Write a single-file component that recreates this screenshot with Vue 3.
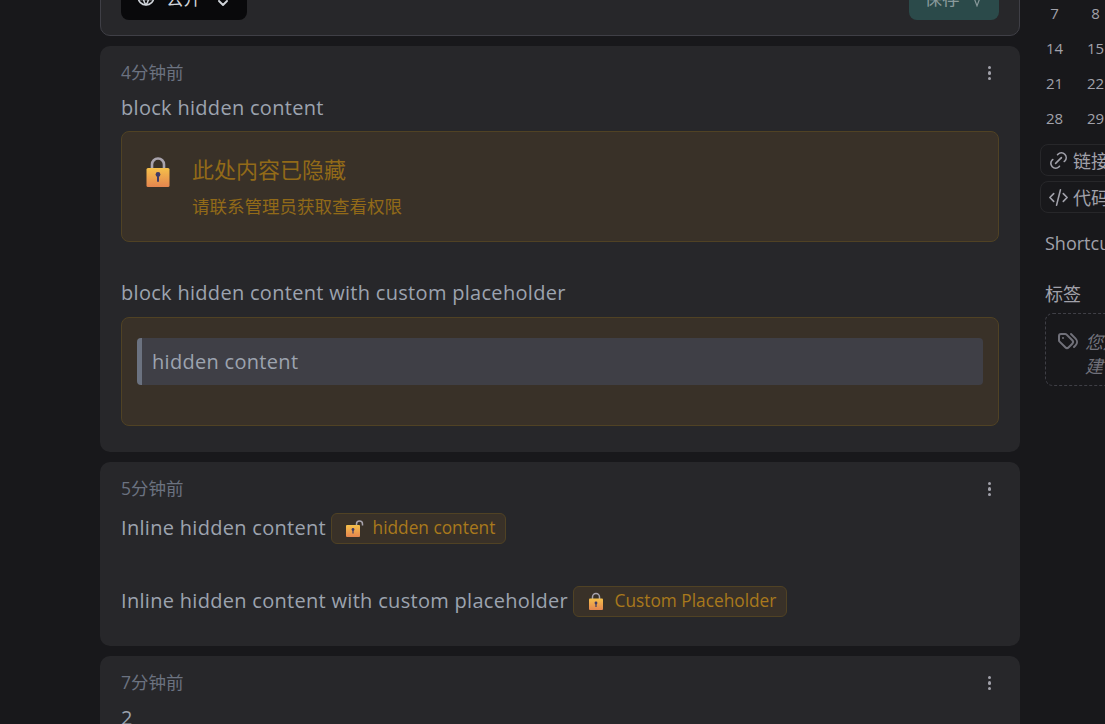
<script setup>
const days = [[7, 8], [14, 15], [21, 22], [28, 29]];
</script>

<template>
  <div class="page">
    <main class="main">
      <section class="editor">
        <div class="vis">
          <svg class="globe" width="20" height="20" viewBox="0 0 24 24" fill="none" stroke="currentColor" stroke-width="1.800" stroke-linecap="round"><circle cx="12" cy="12" r="9.500"/><path d="M3 9h18M3 15h18M11.500 3a17 17 0 0 0 0 18M12.500 3a17 17 0 0 1 0 18"/></svg>
          <span class="vis-label">公开</span>
          <svg class="chev" width="16" height="16" viewBox="0 0 24 24" fill="none" stroke="currentColor" stroke-width="2.800" stroke-linecap="round" stroke-linejoin="round"><path d="M6 9l6 6 6-6"/></svg>
        </div>
        <div class="save">
          <span>保存</span>
          <svg class="save-v" width="14" height="14" viewBox="0 0 24 24" fill="none" stroke="currentColor" stroke-width="2"><path d="M6 6l6 16 6-16"/></svg>
        </div>
      </section>

      <article class="card c1">
        <header class="meta"><span class="ago">4分钟前</span><span class="dots"><i></i><i></i><i></i></span></header>
        <p class="line">block hidden content</p>
        <div class="hidden-box">
          <svg class="lock" width="28" height="32" viewBox="0 0 28 32">
            <defs><linearGradient id="lg1" x1="0" y1="0" x2="0" y2="1"><stop offset="0" stop-color="#f5c04a"/><stop offset="1" stop-color="#e5854f"/></linearGradient></defs>
            <path d="M8 14V7.500a6 6 0 0 1 12 0V14" fill="none" stroke="#a8a3ad" stroke-width="2.600"/>
            <rect x="2.500" y="11" width="23" height="19" rx="1.500" fill="url(#lg1)"/>
            <circle cx="14" cy="17.500" r="2.400" fill="#3f3a66"/><rect x="13" y="17.500" width="2" height="7.500" rx="1" fill="#3f3a66"/>
          </svg>
          <div>
            <div class="hb-title">此处内容已隐藏</div>
            <div class="hb-sub">请联系管理员获取查看权限</div>
          </div>
        </div>
        <p class="line second">block hidden content with custom placeholder</p>
        <div class="hidden-box custom">
          <blockquote class="quote">hidden content</blockquote>
        </div>
      </article>

      <article class="card c2">
        <header class="meta"><span class="ago">5分钟前</span><span class="dots"><i></i><i></i><i></i></span></header>
        <p class="line inline first">Inline hidden content
          <span class="pill">
            <svg width="18" height="18" viewBox="0 0 18 18">
              <defs><linearGradient id="lg2" x1="0" y1="0" x2="0" y2="1"><stop offset="0" stop-color="#f5c04a"/><stop offset="1" stop-color="#e5854f"/></linearGradient></defs>
              <path d="M10.500 7V5a3 3 0 0 1 6 0v1.500" fill="none" stroke="#a8a3ad" stroke-width="1.500"/>
              <rect x="0" y="6" width="14" height="12" rx="1" fill="url(#lg2)"/>
              <circle cx="7" cy="10.500" r="1.400" fill="#3f3a66"/><rect x="6.400" y="10.500" width="1.200" height="4" fill="#3f3a66"/>
            </svg>
            hidden content
          </span>
        </p>
        <p class="line inline gap2">Inline hidden content with custom placeholder
          <span class="pill">
            <svg width="18" height="18" viewBox="0 0 18 18">
              <defs><linearGradient id="lg3" x1="0" y1="0" x2="0" y2="1"><stop offset="0" stop-color="#f5c04a"/><stop offset="1" stop-color="#e5854f"/></linearGradient></defs>
              <path d="M4.500 8V5a3.500 3.500 0 0 1 7 0v3" fill="none" stroke="#a8a3ad" stroke-width="1.500"/>
              <rect x="1" y="6.500" width="14" height="11.500" rx="1" fill="url(#lg3)"/>
              <circle cx="8" cy="11" r="1.400" fill="#3f3a66"/><rect x="7.400" y="11" width="1.200" height="4" fill="#3f3a66"/>
            </svg>
            Custom Placeholder
          </span>
        </p>
      </article>

      <article class="card c3">
        <header class="meta"><span class="ago">7分钟前</span><span class="dots"><i></i><i></i><i></i></span></header>
        <p class="line">2</p>
      </article>
    </main>

    <aside class="side">
      <div class="cal">
        <div v-for="row in days" :key="row[0]" class="cal-row">
          <span v-for="d in row" :key="d" class="cal-d">{{ d }}</span>
        </div>
      </div>
      <div class="tag-btn first-btn">
        <svg width="23" height="23" viewBox="0 0 24 24" fill="none" stroke="currentColor" stroke-width="1.700" stroke-linecap="round" stroke-linejoin="round"><path d="M9 15l6-6"/><path d="M11 6l.463-.536a5 5 0 0 1 7.071 7.072l-.534 .464"/><path d="M13 18l-.397 .534a5.068 5.068 0 0 1-7.127 0a4.972 4.972 0 0 1 0-7.071l.524-.463"/></svg>
        <span>链接分享</span>
      </div>
      <div class="tag-btn">
        <svg width="23" height="23" viewBox="0 0 24 24" fill="none" stroke="currentColor" stroke-width="1.700" stroke-linecap="round" stroke-linejoin="round"><path d="M7 8l-4 4l4 4"/><path d="M17 8l4 4l-4 4"/><path d="M14 4l-4 16"/></svg>
        <span>代码片段</span>
      </div>
      <div class="side-title short">Shortcuts</div>
      <div class="side-title tags">标签</div>
      <div class="tag-empty">
        <svg class="tags-icon" width="24" height="24" viewBox="0 0 24 24" fill="none" stroke="currentColor" stroke-width="2" stroke-linecap="round" stroke-linejoin="round"><path d="M3 8v4.172a2 2 0 0 0 .586 1.414l5.710 5.710a2.410 2.410 0 0 0 3.408 0l3.592-3.592a2.410 2.410 0 0 0 0-3.408l-5.710-5.710a2 2 0 0 0-1.414-.586h-4.172a2 2 0 0 0-2 2z"/><path d="M18 19l1.592-1.592a4.820 4.820 0 0 0 0-6.816l-4.592-4.592"/><path d="M7 10h-.01"/></svg>
        <em>您还没有创建任何标签，快去创<br />建一个吧</em>
      </div>
    </aside>
  </div>
</template>

<style scoped>
.page {
  display: flex;
  align-items: flex-start;
  width: 1105px;
  height: 724px;
  overflow: hidden;
  background: #18181b;
  font-family: "Open Sans", "Noto Sans CJK SC", sans-serif;
  color: #9ca3af;
}
.main {
  flex: 0 0 920px;
  margin-left: 100px;
  margin-top: -44px;
  display: flex;
  flex-direction: column;
  gap: 10px;
}
.editor {
  height: 80px;
  box-sizing: border-box;
  border: 1px solid #3f3f46;
  border-radius: 10px;
  background: #27272a;
  display: flex;
  justify-content: space-between;
  align-items: flex-end;
  padding: 0 20px 15px;
}
.vis {
  height: 40px;
  width: 126px;
  box-sizing: border-box;
  background: #09090b;
  border-radius: 8px;
  display: flex;
  align-items: center;
  gap: 10px;
  padding: 0 0 6px 15px;
  color: #d1d5db;
  font-size: 17.500px;
  white-space: nowrap;
}
.vis svg { flex: none; }
.vis-label { margin-right: 3.500px; }
.chev { margin-top: 12px; }
.save {
  height: 40px;
  width: 90px;
  box-sizing: border-box;
  background: #2b4a4a;
  border-radius: 8px;
  display: flex;
  align-items: center;
  justify-content: center;
  gap: 10px;
  padding-bottom: 6px;
  color: #8a9a9c;
  font-size: 17.500px;
}
.save-v { margin-top: 6px; }
.card {
  background: #27272a;
  border-radius: 10px;
  padding: 13px 21px 0;
  box-sizing: border-box;
}
.c1 { height: 406px; }
.c2 { height: 184px; }
.c3 { height: 120px; }
.meta {
  display: flex;
  justify-content: space-between;
  align-items: center;
  height: 28px;
  margin-bottom: 3px;
  font-size: 17.500px;
  line-height: 28px;
  color: #6b7280;
}
.ago { margin-top: -2px; }
.dots {
  display: flex;
  flex-direction: column;
  gap: 2.300px;
  width: 3.400px;
  margin-right: 8px;
}
.dots i {
  display: block;
  width: 3.400px;
  height: 3.400px;
  border-radius: 50%;
  background: #a1a1aa;
}
.line {
  margin: 0;
  font-size: 20px;
  letter-spacing: 0.300px;
  line-height: 36px;
  color: #9ca3af;
}
.second { margin-top: 33px; }
.hidden-box {
  display: flex;
  align-items: flex-start;
  gap: 20px;
  margin-top: 5px;
  height: 111px;
  box-sizing: border-box;
  padding: 22px 22px 0;
  background: #393128;
  border: 1px solid #504224;
  border-radius: 8px;
}
.lock { margin-top: 3px; flex: none; }
.hb-title {
  font-size: 22px;
  line-height: 30px;
  color: #926a18;
}
.hb-sub {
  margin-top: 10px;
  font-size: 17.500px;
  line-height: 24px;
  color: #926a18;
}
.hidden-box.custom {
  display: block;
  height: 109px;
  margin-top: 6px;
  padding: 20px 15px 0;
}
.quote {
  margin: 0;
  height: 47px;
  box-sizing: border-box;
  padding-left: 10px;
  border-left: 5px solid #6b7280;
  border-radius: 4px;
  background: #3f3f46;
  font-size: 20px;
  letter-spacing: 0.300px;
  line-height: 47px;
  color: #9ca3af;
}
.inline { line-height: 38px; }
.first { margin-top: 6px; }
.gap2 { margin-top: 35px; }
.pill {
  display: inline-flex;
  align-items: center;
  gap: 9px;
  height: 31px;
  box-sizing: border-box;
  padding: 0 10px 0 14px;
  margin-left: -1px;
  background: #393128;
  border: 1px solid #504224;
  border-radius: 6px;
  font-size: 17.300px;
  letter-spacing: 0;
  color: #a9791c;
  vertical-align: -2px;
}
.pill svg { flex: none; }
.side {
  flex: 0 0 200px;
  margin-left: 20px;
  font-size: 17px;
  color: #a1a1aa;
}
.cal { margin-top: -5px; }
.cal-row {
  display: flex;
  height: 35px;
  align-items: center;
  margin-left: -6px;
}
.cal-d {
  width: 41px;
  flex: none;
  text-align: center;
  font-size: 15px;
  color: #a1a1aa;
}
.tag-btn {
  display: flex;
  align-items: center;
  gap: 3.500px;
  width: 200px;
  height: 32px;
  box-sizing: border-box;
  margin-top: 5px;
  padding-left: 5.500px;
  border: 1px solid #27272a;
  border-radius: 8px;
  font-size: 18px;
}
.tag-btn svg { flex: none; }
.first-btn { margin-top: 9px; }
.side-title {
  margin-left: 5px;
  font-size: 18px;
  line-height: 26px;
}
.short { margin-top: 17px; }
.tags { margin-top: 25px; }
.tag-empty {
  display: flex;
  gap: 5px;
  width: 190px;
  margin: 6px 0 0 5px;
  height: 73px;
  box-sizing: border-box;
  padding: 16px 10px 0 10px;
  border: 1px dashed #3f3f46;
  border-radius: 8px;
  color: #71717a;
  font-size: 18px;
  line-height: 24px;
  white-space: nowrap;
}
.tags-icon { flex: none; margin-top: -2px; }
</style>

<style>
html, body { background: #18181b; overflow: hidden; }
</style>
